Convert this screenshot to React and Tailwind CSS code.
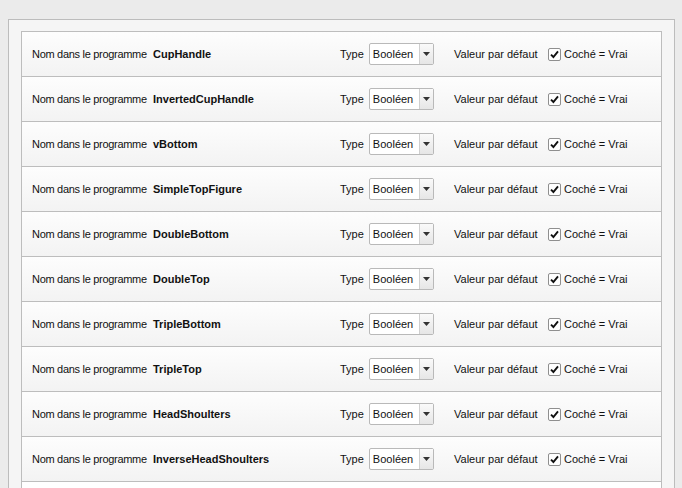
const rows = [
  'CupHandle',
  'InvertedCupHandle',
  'vBottom',
  'SimpleTopFigure',
  'DoubleBottom',
  'DoubleTop',
  'TripleBottom',
  'TripleTop',
  'HeadShoulters',
  'InverseHeadShoulters',
]

function SelectBox() {
  return (
    <div className="flex h-[22px] w-[65px] items-stretch rounded-[2px] border border-[#b9b9b9] bg-white">
      <div className="flex flex-1 items-center pl-[3px] text-[11px] text-[#111]">Booléen</div>
      <div className="flex w-[14px] items-center justify-center border-l border-[#cfcfcf] bg-gradient-to-b from-[#fafafa] to-[#e6e6e6]">
        <svg width="7" height="4" viewBox="0 0 7 4">
          <path d="M0 0 H7 L3.5 4 Z" fill="#333" />
        </svg>
      </div>
    </div>
  )
}

function CheckBox() {
  return (
    <div className="flex h-[13px] w-[13px] items-center justify-center rounded-[2px] border border-[#8f8f8f] bg-white">
      <svg width="9" height="9" viewBox="0 0 9 9">
        <path d="M1 4.6 L3.4 7 L8 1.4" fill="none" stroke="#111" strokeWidth="1.9" />
      </svg>
    </div>
  )
}

function Row({ name }) {
  return (
    <div className="flex h-[45px] items-center border-b border-[#bdbdbd] bg-gradient-to-b from-[#fdfdfd] to-[#f3f3f3] text-[11px] text-[#111]">
      <div className="flex w-[318px] items-center pl-[10px]">
        <span className="w-[121px] shrink-0 whitespace-nowrap tracking-[-0.3px]">Nom dans le programme</span>
        <span className="font-bold">{name}</span>
      </div>
      <div className="flex w-[114px] items-center">
        <span className="mr-[5px]">Type</span>
        <SelectBox />
      </div>
      <div className="flex items-center">
        <span className="w-[94px] whitespace-nowrap">Valeur par défaut</span>
        <CheckBox />
        <span className="ml-[3px]">Coché = Vrai</span>
      </div>
    </div>
  )
}

export default function App() {
  return (
    <div
      className="h-[488px] overflow-hidden bg-[#ebebeb] pl-[8px] pt-[19px]"
      style={{ fontFamily: '"Liberation Sans", Arial, sans-serif' }}
    >
      <div className="h-[600px] w-[667px] border border-[#bcbcbc] bg-[#f5f5f5] px-[12px] pt-[11px]">
        <div className="h-[560px] border-x border-t border-[#bdbdbd] bg-white">
          {rows.map((r) => (
            <Row key={r} name={r} />
          ))}
        </div>
      </div>
    </div>
  )
}
